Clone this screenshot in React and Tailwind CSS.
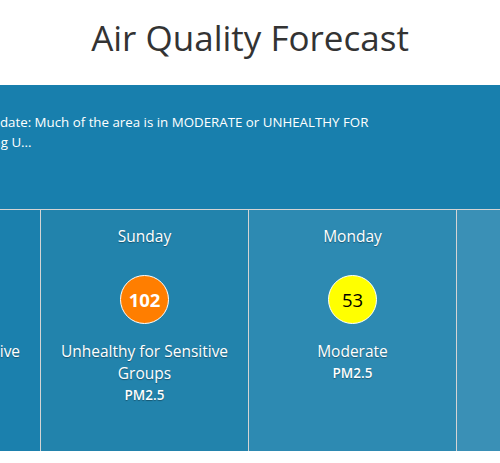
const DAYS = [
  { day: 'Saturday', aqi: 104, label: 'Unhealthy for Sensitive Groups', pollutant: 'PM2.5', tone: 'usg', bg: 'bg-[#1b80ad]' },
  { day: 'Sunday', aqi: 102, label: 'Unhealthy for Sensitive Groups', pollutant: 'PM2.5', tone: 'usg', bg: 'bg-[#2283ac]' },
  { day: 'Monday', aqi: 53, label: 'Moderate', pollutant: 'PM2.5', tone: 'moderate', bg: 'bg-[#2d8ab2]' },
  { day: 'Tuesday', aqi: 48, label: 'Good', pollutant: 'PM2.5', tone: 'good', bg: 'bg-[#3a90b6]' },
];

const BADGE = {
  usg: 'bg-[#ff7e00] text-white font-bold',
  moderate: 'bg-[#ffff00] text-black font-normal',
  good: 'bg-[#00e400] text-black font-normal',
};

function DayColumn({ d }) {
  return (
    <div className={`flex w-[208px] shrink-0 flex-col items-center border-l border-[#d4d4d4] pt-[14px] text-center text-white ${d.bg}`}>
      <p className="text-[15.5px] leading-6 [text-shadow:0_1px_1px_rgba(0,0,0,0.35)]">{d.day}</p>
      <div
        className={`mt-[27px] flex h-[49px] w-[49px] items-center justify-center rounded-full border border-white text-[18.5px] ${BADGE[d.tone]}`}
      >
        {d.aqi}
      </div>
      <p className="mt-[16px] px-4 text-[15.5px] leading-[22px] [text-shadow:0_1px_1px_rgba(0,0,0,0.35)]">{d.label}</p>
      <p className="mt-px text-[13.5px] font-semibold leading-5 [text-shadow:0_1px_1px_rgba(0,0,0,0.35)]">{d.pollutant}</p>
    </div>
  );
}

export default function App() {
  return (
    <div className="h-[463px] w-[500px] overflow-hidden bg-white font-['Open_Sans',sans-serif]">
      <header className="flex h-[85px] items-center justify-center pb-[11px]">
        <h1 className="text-[35px] leading-none text-[#333333]">Air Quality Forecast</h1>
      </header>

      <section className="bg-[#187fad]">
        <div className="ml-[-86px] h-[124px] whitespace-nowrap pt-[27px] text-[13.3px] leading-5 text-white">
          Air Quality Update: Much of the area is in MODERATE or UNHEALTHY FOR
          <br />
          GROUPS, rising U...
        </div>
        <div className="ml-[-168px] flex h-[242px] border-t border-[#d4d4d4]">
          {DAYS.map((d) => (
            <DayColumn key={d.day} d={d} />
          ))}
        </div>
      </section>
    </div>
  );
}
